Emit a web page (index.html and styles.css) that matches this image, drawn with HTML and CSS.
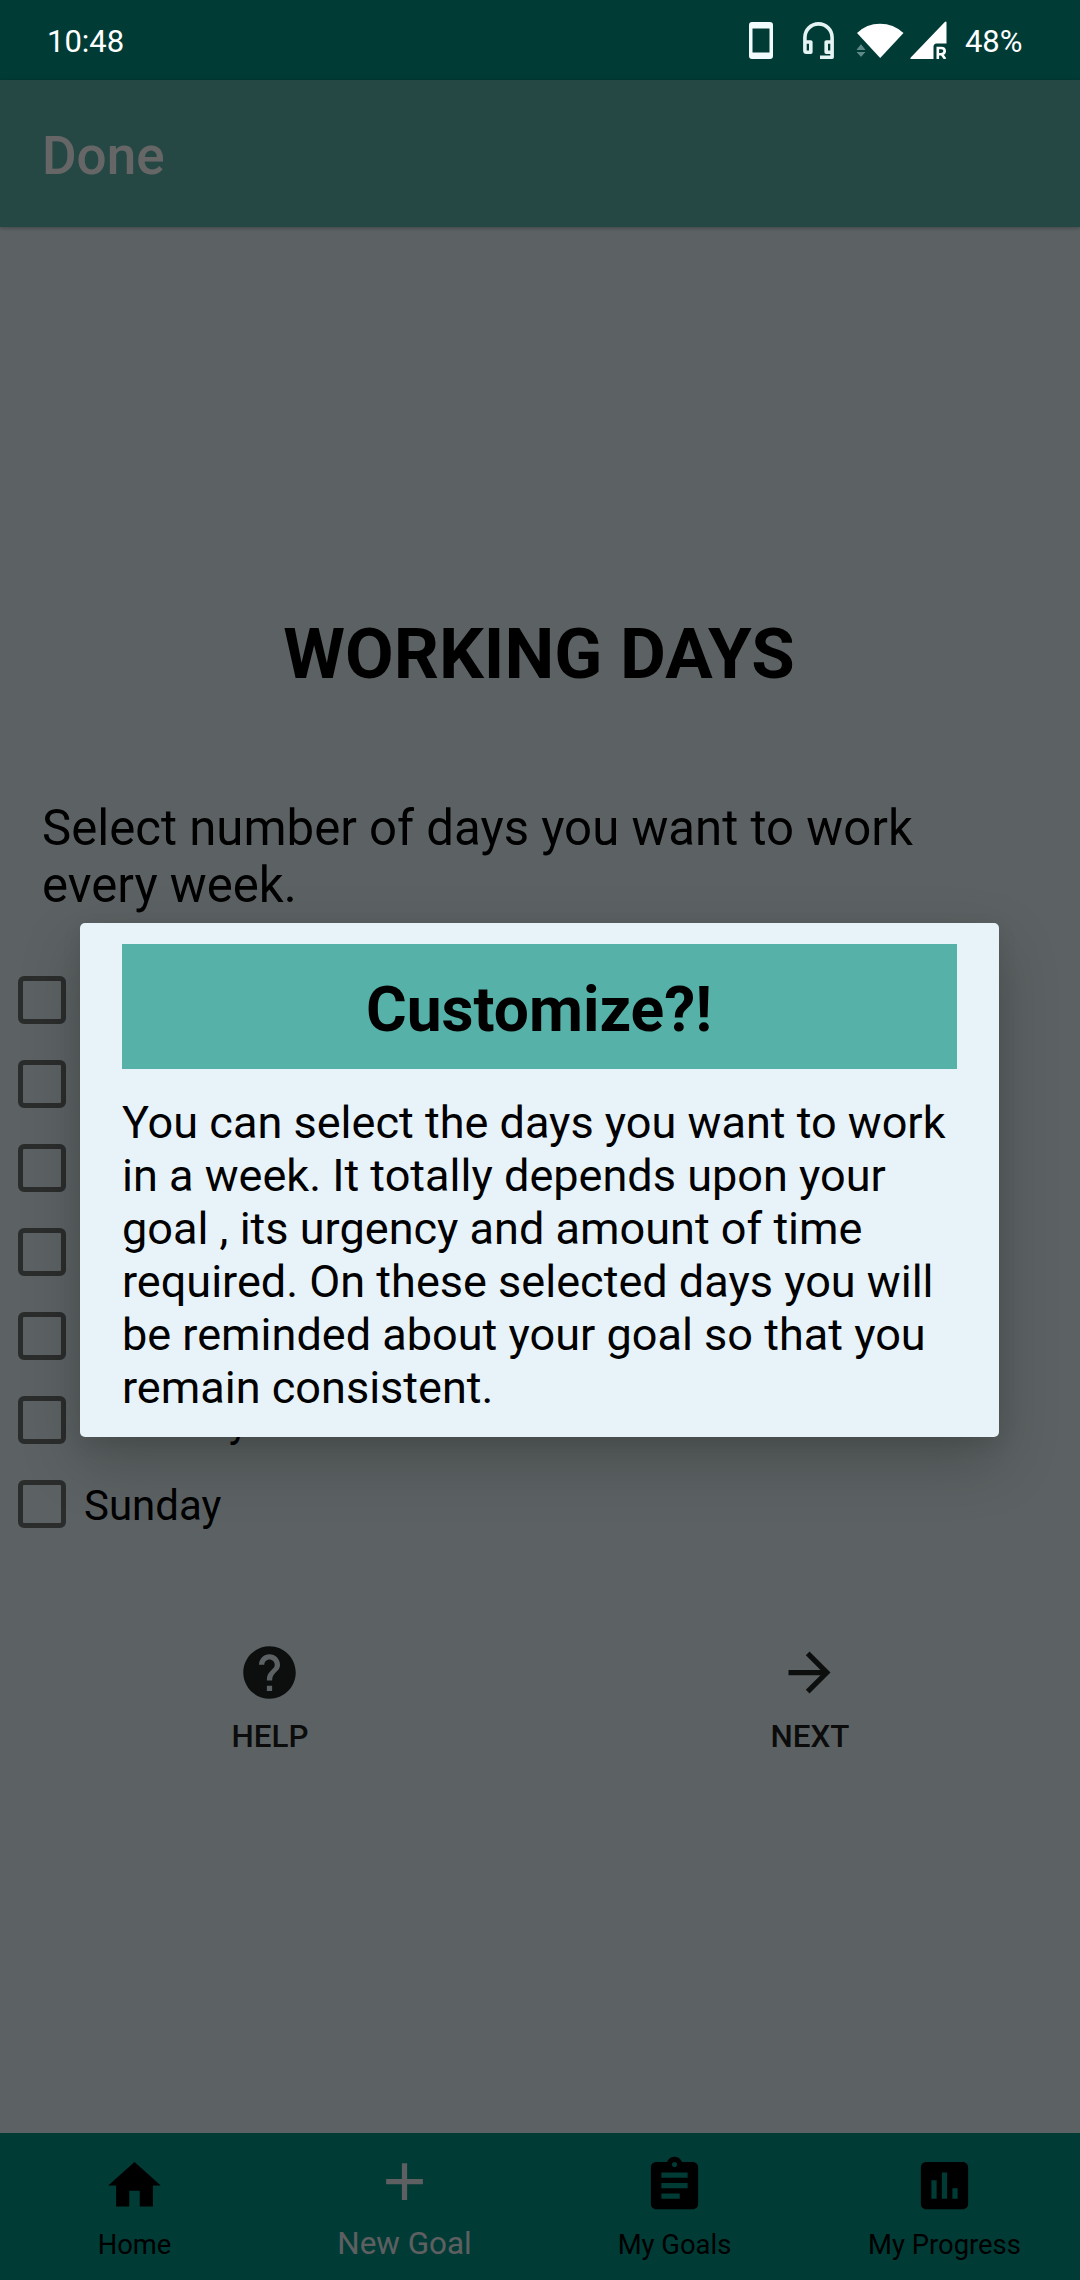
FILE: index.html
```html
<!DOCTYPE html>
<html lang="en">
<head>
<meta charset="utf-8">
<title>Working Days</title>
<link rel="stylesheet" href="styles.css">
</head>
<body>
<div class="screen">
  <header class="status">
    <span class="clock">10:48</span>
    <div class="status-icons">
      <svg class="ic-phone" width="24" height="37" viewBox="0 0 24 37"><path fill="#f2fbfb" fill-rule="evenodd" d="M3 0H21Q24 0 24 3V34Q24 37 21 37H3Q0 37 0 34V3Q0 0 3 0ZM3.5 6.5V30.5H20.5V6.5Z"/></svg>
      <svg class="ic-headset" width="31" height="37" viewBox="0 0 31 37"><path fill="none" stroke="#e6f3f3" stroke-width="3.6" stroke-linejoin="round" d="M1.9 29V15.5A13.6 13.6 0 0 1 29.1 15.5V35.2H17M1.9 20H7.8V30.2H3.4Q1.9 30.2 1.9 28.5ZM29.1 20H23.2V30.2H29.1"/></svg>
      <svg class="ic-wifi" width="48" height="37" viewBox="0 0 48 37"><path fill="#fff" d="M1 11Q10.500 1.700 24 1.700T47.500 11L24.200 36Z"/><path fill="#5d8a86" stroke="#003b36" stroke-width="1" d="M-.5 28.500 5 21.500 10.500 28.500ZM-.5 29.500H10.500L5 35.500Z"/></svg>
      <svg class="ic-signal" width="37" height="38" viewBox="0 0 37 38"><path fill="#fff" d="M36.500 1.500V22.500H26.500Q23.500 22.500 23.500 26V38H1.500Q-.5 38 1 36.300L34.800 1Q36.500 0 36.500 1.500Z"/><path fill="none" stroke="#fff" stroke-width="2.600" d="M27.800 38V27H31.300Q34.700 27 34.700 30T31.300 33.200H27.800M31.800 33.200 35.200 38"/></svg>
      <span class="battery">48%</span>
    </div>
  </header>
  <div class="app">
    <div class="appbar">Done</div>
    <main class="content">
      <h1 class="title">WORKING DAYS</h1>
      <p class="prompt">Select number of days you want to work<br>every week.</p>
      <ul class="days">
        <li class="day"><i class="box" role="checkbox" aria-label="Monday"></i></li>
        <li class="day"><i class="box" role="checkbox" aria-label="Tuesday"></i></li>
        <li class="day"><i class="box" role="checkbox" aria-label="Wednesday"></i></li>
        <li class="day"><i class="box" role="checkbox" aria-label="Thursday"></i></li>
        <li class="day"><i class="box" role="checkbox" aria-label="Friday"></i></li>
        <li class="day"><i class="box" role="checkbox" aria-label="Saturday"></i><span>Saturday</span></li>
        <li class="day"><i class="box" role="checkbox" aria-label="Sunday"></i><span>Sunday</span></li>
      </ul>
      <div class="actions">
        <div class="action">
          <svg class="icon" viewBox="0 0 24 24"><path d="M12 2C6.480 2 2 6.480 2 12s4.480 10 10 10 10-4.480 10-10S17.520 2 12 2zm1 17h-2v-2h2v2zm2.070-7.750l-.9.920C13.450 12.900 13 13.500 13 15h-2v-.5c0-1.100.45-2.100 1.170-2.830l1.240-1.260c.37-.36.59-.86.59-1.410 0-1.100-.9-2-2-2s-2 .9-2 2H8c0-2.210 1.790-4 4-4s4 1.790 4 4c0 .88-.36 1.680-.93 2.250z"/></svg>
          <span>HELP</span>
        </div>
        <div class="action">
          <svg class="icon" viewBox="0 0 24 24"><path d="M12 4l-1.410 1.410L16.170 11H4v2h12.170l-5.580 5.590L12 20l8-8z"/></svg>
          <span>NEXT</span>
        </div>
      </div>
    </main>
    <nav class="nav">
      <div class="tab"><svg class="icon" viewBox="0 0 24 24"><path d="M10 20v-6h4v6h5v-8h3L12 3 2 12h3v8z"/></svg><span>Home</span></div>
      <div class="tab active"><svg class="icon" viewBox="0 0 24 24"><path d="M19 13h-6v6h-2v-6H5v-2h6V5h2v6h6v2z"/></svg><span>New Goal</span></div>
      <div class="tab"><svg class="icon" viewBox="0 0 24 24"><path d="M19 3h-4.180C14.400 1.840 13.300 1 12 1c-1.300 0-2.400.84-2.820 2H5c-1.100 0-2 .9-2 2v14c0 1.100.9 2 2 2h14c1.100 0 2-.9 2-2V5c0-1.100-.9-2-2-2zm-7 0c.55 0 1 .45 1 1s-.45 1-1 1-1-.45-1-1 .45-1 1-1zm2 14H7v-2h7v2zm3-4H7v-2h10v2zm0-4H7V7h10v2z"/></svg><span>My Goals</span></div>
      <div class="tab"><svg class="icon" viewBox="0 0 24 24"><path d="M19 3H5c-1.100 0-2 .9-2 2v14c0 1.100.9 2 2 2h14c1.100 0 2-.9 2-2V5c0-1.100-.9-2-2-2zM9 17H7v-7h2v7zm4 0h-2V7h2v10zm4 0h-2v-4h2v4z"/></svg><span>My Progress</span></div>
    </nav>
    <div class="scrim"></div>
  </div>
  <section class="dialog">
    <h2 class="dialog-title">Customize?!</h2>
    <p class="dialog-text">You can select the days you want to work<br>in a week. It totally depends upon your<br>goal , its urgency and amount of time<br>required. On these selected days you will<br>be reminded about your goal so that you<br>remain consistent.</p>
  </section>
</div>
</body>
</html>
```
FILE: styles.css
```css
* { box-sizing: border-box; }

body {
  margin: 0;
  font-family: Roboto, "Noto Sans", sans-serif;
  color: #000;
}

h1, h2, p, ul { margin: 0; padding: 0; }

.screen {
  position: relative;
  display: flex;
  flex-direction: column;
  width: 1080px;
  height: 2280px;
  overflow: hidden;
}

/* Status bar */
.status {
  display: flex;
  justify-content: space-between;
  height: 80px;
  padding: 0 57.500px 0 47px;
  background: #003b36;
  color: #fff;
  font-size: 31px;
  line-height: 83px;
}
.status-icons { display: flex; align-items: flex-start; }
.status-icons svg { display: block; margin-top: 22px; }
.status-icons .ic-signal { margin-top: 21px; }
.ic-headset { margin-left: 30px; }
.ic-wifi { margin-left: 22px; }
.ic-signal { margin-left: 6px; }
.battery { margin-left: 17.500px; }

/* App area below the status bar */
.app {
  position: relative;
  flex: 1;
  display: flex;
  flex-direction: column;
  background: #e6f4f8;
}
.scrim {
  position: absolute;
  inset: 0;
  background: rgba(0, 0, 0, .6);
}

.appbar {
  height: 147px;
  padding-left: 42px;
  background: #5db3ab;
  color: #fff;
  font-size: 53px;
  font-weight: 500;
  line-height: 153px;
  box-shadow: 0 1px 4px rgba(0, 0, 0, .3);
}

.content { flex: 1; }

.title {
  padding: 385px 2px 0 0;
  font-size: 70.6px;
  font-weight: 700;
  line-height: 84px;
  text-align: center;
}
.prompt {
  margin: 103.5px 42px 0;
  font-size: 49.15px;
  line-height: 57.5px;
}

.days { margin-top: 43.5px; list-style: none; }
.day {
  display: flex;
  align-items: center;
  height: 84px;
  font-size: 42px;
  line-height: 80px;
}
.day span { padding-top: 4px; }
.box {
  width: 48px;
  height: 48px;
  margin: 0 18px;
  border: 5px solid #6b7072;
  border-radius: 6px;
}

.icon { display: block; width: 63px; height: 63px; }

.actions {
  display: flex;
  padding-top: 95px;
}
.action {
  flex: 1;
  display: flex;
  flex-direction: column;
  align-items: center;
  gap: 13.600px;
  font-size: 31.4px;
  font-weight: 500;
  line-height: 37px;
  color: #1e1f20;
}
.action .icon { margin-right: 1px; fill: #222627; }

/* Bottom navigation */
.nav {
  display: flex;
  height: 147px;
  background: #009387;
}
.tab {
  flex: 1 0 0;
  display: flex;
  flex-direction: column;
  align-items: center;
  gap: 11.600px;
  padding: 21px 1px 0 0;
  font-size: 27.4px;
  line-height: 32px;
}
.tab.active {
  padding-top: 17px;
  color: #e9eef0;
  fill: #e9eef0;
  font-size: 31.4px;
  line-height: 37px;
}

/* Dialog */
.dialog {
  position: absolute;
  left: 80px;
  top: 923px;
  width: 919px;
  height: 514px;
  padding: 21px 42px 0;
  background: #e7f3f8;
  border-radius: 5px;
  box-shadow: 0 24px 60px rgba(0, 0, 0, .22), 0 6px 20px rgba(0, 0, 0, .08);
}
.dialog-title {
  height: 125px;
  padding: 6px 1px 0 0;
  background: #56b1a8;
  font-size: 62.3px;
  font-weight: 700;
  line-height: 119px;
  text-align: center;
}
.dialog-text {
  margin-top: 27px;
  font-size: 45.05px;
  line-height: 53px;
  white-space: nowrap;
}
```
